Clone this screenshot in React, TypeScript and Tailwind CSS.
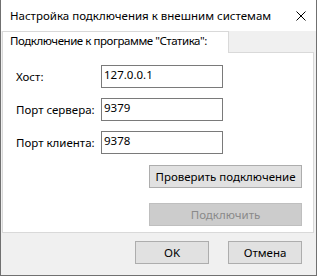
import React from "react";

const font = { fontFamily: '"Noto Sans", "Segoe UI", sans-serif' };

function Field({ label, value }: { label: string; value: string }) {
  return (
    <div className="flex items-center h-[23px]">
      <div className="w-[85px] text-[11.5px] leading-4 text-black pt-[1px]">{label}</div>
      <div className="w-[122px] h-[23px] border border-[#7a7a7a] bg-white pl-[2px] pt-[1px] text-[11.5px] leading-4 text-black">
        {value}
      </div>
    </div>
  );
}

export default function App() {
  return (
    <div
      className="w-[317px] h-[276px] flex flex-col border-x border-b border-[#707070] bg-[#f0f0f0] overflow-hidden"
      style={font}
    >
      <div className="h-[31px] bg-white flex items-start justify-between shrink-0">
        <div className="mt-[8px] ml-[9px] text-[11.5px] leading-4 text-black whitespace-nowrap">
          Настройка подключения к внешним системам
        </div>
        <svg width="10" height="10" viewBox="0 0 10 10" className="mt-[11px] mr-[10px]">
          <path d="M0.5 0.5 L9.5 9.5 M9.5 0.5 L0.5 9.5" stroke="#000" strokeWidth="1" fill="none" />
        </svg>
      </div>
      <div className="flex flex-col pl-[1px] pr-[2px]">
        <div className="relative z-10 w-[227px] h-[22px] bg-white border-x border-t border-[#d9d9d9] pl-[7px] pt-[1px] text-[11.5px] leading-4 text-black whitespace-nowrap tracking-[-0.45px]">
          Подключение к программе "Статика":
        </div>
        <div className="-mt-px h-[181px] bg-white border border-[#d9d9d9] flex flex-col pt-[12px] pl-[13px] pr-[11px]">
          <div className="flex flex-col gap-[10px]">
            <Field label="Хост:" value="127.0.0.1" />
            <Field label="Порт сервера:" value="9379" />
            <Field label="Порт клиента:" value="9378" />
          </div>
          <div className="flex flex-col items-end mt-[11px] gap-[15px]">
            <div className="w-[153px] h-[23px] bg-[#e1e1e1] border border-[#adadad] flex items-center justify-center text-[11.5px] leading-4 text-black whitespace-nowrap">
              Проверить подключение
            </div>
            <div className="w-[153px] h-[23px] bg-[#cccccc] border border-[#bfbfbf] flex items-center justify-center text-[11.5px] leading-4 text-[#8a8a8a] whitespace-nowrap">
              Подключить
            </div>
          </div>
        </div>
      </div>
      <div className="flex justify-end gap-[19px] pt-[8px] pr-[14px]">
        <div className="w-[74px] h-[23px] bg-[#e1e1e1] border border-[#adadad] flex items-center justify-center text-[11.5px] leading-4 text-black">
          OK
        </div>
        <div className="w-[74px] h-[23px] bg-[#e1e1e1] border border-[#adadad] flex items-center justify-center text-[11.5px] leading-4 text-black">
          Отмена
        </div>
      </div>
    </div>
  );
}
